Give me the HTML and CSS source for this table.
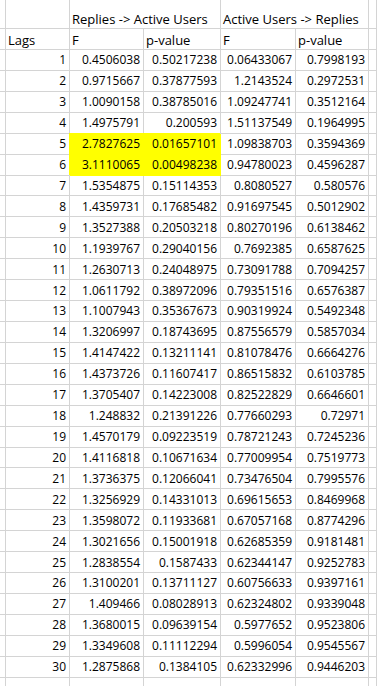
FILE: index.html
```html
<!DOCTYPE html>
<html lang="en">
<head>
<meta charset="utf-8">
<title>Granger causality lags</title>
<link rel="stylesheet" href="styles.css">
</head>
<body>
<div class="sheet">
  <div class="row head1">
    <div class="c"></div><div class="c"></div>
    <div class="c span2">Replies -&gt; Active Users</div>
    <div class="c span2">Active Users -&gt; Replies</div>
    <div class="c"></div>
  </div>
  <div class="row head2">
    <div class="c"></div><div class="c">Lags</div><div class="c">F</div><div class="c">p-value</div><div class="c">F</div><div class="c">p-value</div><div class="c"></div>
  </div>
  <div class="row"><div class="c"></div><div class="c n">1</div><div class="c n">0.4506038</div><div class="c n">0.50217238</div><div class="c n">0.06433067</div><div class="c n">0.7998193</div><div class="c"></div></div>
  <div class="row"><div class="c"></div><div class="c n">2</div><div class="c n">0.9715667</div><div class="c n">0.37877593</div><div class="c n">1.2143524</div><div class="c n">0.2972531</div><div class="c"></div></div>
  <div class="row"><div class="c"></div><div class="c n">3</div><div class="c n">1.0090158</div><div class="c n">0.38785016</div><div class="c n">1.09247741</div><div class="c n">0.3512164</div><div class="c"></div></div>
  <div class="row"><div class="c"></div><div class="c n">4</div><div class="c n">1.4975791</div><div class="c n">0.200593</div><div class="c n">1.51137549</div><div class="c n">0.1964995</div><div class="c"></div></div>
  <div class="row"><div class="c"></div><div class="c n">5</div><div class="c n hl">2.7827625</div><div class="c n hl">0.01657101</div><div class="c n">1.09838703</div><div class="c n">0.3594369</div><div class="c"></div></div>
  <div class="row"><div class="c"></div><div class="c n">6</div><div class="c n hl">3.1110065</div><div class="c n hl">0.00498238</div><div class="c n">0.94780023</div><div class="c n">0.4596287</div><div class="c"></div></div>
  <div class="row"><div class="c"></div><div class="c n">7</div><div class="c n">1.5354875</div><div class="c n">0.15114353</div><div class="c n">0.8080527</div><div class="c n">0.580576</div><div class="c"></div></div>
  <div class="row"><div class="c"></div><div class="c n">8</div><div class="c n">1.4359731</div><div class="c n">0.17685482</div><div class="c n">0.91697545</div><div class="c n">0.5012902</div><div class="c"></div></div>
  <div class="row"><div class="c"></div><div class="c n">9</div><div class="c n">1.3527388</div><div class="c n">0.20503218</div><div class="c n">0.80270196</div><div class="c n">0.6138462</div><div class="c"></div></div>
  <div class="row"><div class="c"></div><div class="c n">10</div><div class="c n">1.1939767</div><div class="c n">0.29040156</div><div class="c n">0.7692385</div><div class="c n">0.6587625</div><div class="c"></div></div>
  <div class="row"><div class="c"></div><div class="c n">11</div><div class="c n">1.2630713</div><div class="c n">0.24048975</div><div class="c n">0.73091788</div><div class="c n">0.7094257</div><div class="c"></div></div>
  <div class="row"><div class="c"></div><div class="c n">12</div><div class="c n">1.0611792</div><div class="c n">0.38972096</div><div class="c n">0.79351516</div><div class="c n">0.6576387</div><div class="c"></div></div>
  <div class="row"><div class="c"></div><div class="c n">13</div><div class="c n">1.1007943</div><div class="c n">0.35367673</div><div class="c n">0.90319924</div><div class="c n">0.5492348</div><div class="c"></div></div>
  <div class="row"><div class="c"></div><div class="c n">14</div><div class="c n">1.3206997</div><div class="c n">0.18743695</div><div class="c n">0.87556579</div><div class="c n">0.5857034</div><div class="c"></div></div>
  <div class="row"><div class="c"></div><div class="c n">15</div><div class="c n">1.4147422</div><div class="c n">0.13211141</div><div class="c n">0.81078476</div><div class="c n">0.6664276</div><div class="c"></div></div>
  <div class="row"><div class="c"></div><div class="c n">16</div><div class="c n">1.4373726</div><div class="c n">0.11607417</div><div class="c n">0.86515832</div><div class="c n">0.6103785</div><div class="c"></div></div>
  <div class="row"><div class="c"></div><div class="c n">17</div><div class="c n">1.3705407</div><div class="c n">0.14223008</div><div class="c n">0.82522829</div><div class="c n">0.6646601</div><div class="c"></div></div>
  <div class="row"><div class="c"></div><div class="c n">18</div><div class="c n">1.248832</div><div class="c n">0.21391226</div><div class="c n">0.77660293</div><div class="c n">0.72971</div><div class="c"></div></div>
  <div class="row"><div class="c"></div><div class="c n">19</div><div class="c n">1.4570179</div><div class="c n">0.09223519</div><div class="c n">0.78721243</div><div class="c n">0.7245236</div><div class="c"></div></div>
  <div class="row"><div class="c"></div><div class="c n">20</div><div class="c n">1.4116818</div><div class="c n">0.10671634</div><div class="c n">0.77009954</div><div class="c n">0.7519773</div><div class="c"></div></div>
  <div class="row"><div class="c"></div><div class="c n">21</div><div class="c n">1.3736375</div><div class="c n">0.12066041</div><div class="c n">0.73476504</div><div class="c n">0.7995576</div><div class="c"></div></div>
  <div class="row"><div class="c"></div><div class="c n">22</div><div class="c n">1.3256929</div><div class="c n">0.14331013</div><div class="c n">0.69615653</div><div class="c n">0.8469968</div><div class="c"></div></div>
  <div class="row"><div class="c"></div><div class="c n">23</div><div class="c n">1.3598072</div><div class="c n">0.11933681</div><div class="c n">0.67057168</div><div class="c n">0.8774296</div><div class="c"></div></div>
  <div class="row"><div class="c"></div><div class="c n">24</div><div class="c n">1.3021656</div><div class="c n">0.15001918</div><div class="c n">0.62685359</div><div class="c n">0.9181481</div><div class="c"></div></div>
  <div class="row"><div class="c"></div><div class="c n">25</div><div class="c n">1.2838554</div><div class="c n">0.1587433</div><div class="c n">0.62344147</div><div class="c n">0.9252783</div><div class="c"></div></div>
  <div class="row"><div class="c"></div><div class="c n">26</div><div class="c n">1.3100201</div><div class="c n">0.13711127</div><div class="c n">0.60756633</div><div class="c n">0.9397161</div><div class="c"></div></div>
  <div class="row"><div class="c"></div><div class="c n">27</div><div class="c n">1.409466</div><div class="c n">0.08028913</div><div class="c n">0.62324802</div><div class="c n">0.9339048</div><div class="c"></div></div>
  <div class="row"><div class="c"></div><div class="c n">28</div><div class="c n">1.3680015</div><div class="c n">0.09639154</div><div class="c n">0.5977652</div><div class="c n">0.9523806</div><div class="c"></div></div>
  <div class="row"><div class="c"></div><div class="c n">29</div><div class="c n">1.3349608</div><div class="c n">0.11112294</div><div class="c n">0.5996054</div><div class="c n">0.9545567</div><div class="c"></div></div>
  <div class="row"><div class="c"></div><div class="c n">30</div><div class="c n">1.2875868</div><div class="c n">0.1384105</div><div class="c n">0.62332996</div><div class="c n">0.9446203</div><div class="c"></div></div>
  <div class="row"><div class="c"></div><div class="c"></div><div class="c"></div><div class="c"></div><div class="c"></div><div class="c"></div><div class="c"></div></div>
</div>
</body>
</html>
```
FILE: styles.css
```css
html, body {
  margin: 0;
  padding: 0;
  background: #ffffff;
}

.sheet {
  width: 377px;
  height: 686px;
  overflow: hidden;
  font-family: "Open Sans", Lato, sans-serif;
  font-size: 12px;
  color: #000000;
}

.row {
  display: grid;
  grid-template-columns: 6px 64px 74px 77px 75px 73px 8px;
  height: 20.93px;
}

.row.head1 {
  height: 29px;
}

.row.head2 {
  height: 21px;
}

.c {
  box-sizing: border-box;
  border-right: 1px solid #d4d4d4;
  border-bottom: 1px solid #d4d4d4;
  display: flex;
  align-items: flex-end;
  padding: 0 3px 1.5px 2px;
  line-height: 16px;
  white-space: nowrap;
  overflow: visible;
}

.head1 .c,
.head2 .c {
  font-size: 13px;
}

.c.n {
  justify-content: flex-end;
}

.c.span2 {
  grid-column: span 2;
}

.c.hl {
  background: #ffff00;
  border-color: #ffff00;
  box-shadow: -1px -1px 0 #ffff00;
}
```
